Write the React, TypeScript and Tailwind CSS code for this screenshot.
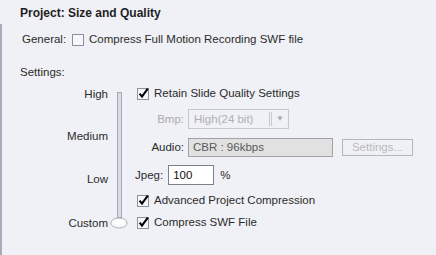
function CheckBox({ checked }: { checked?: boolean }) {
  return (
    <svg width="13" height="13" viewBox="0 0 13 13" className="shrink-0">
      <rect x="0.5" y="1.5" width="11" height="11" fill="#f5f6f9" stroke="#8c91a1" />
      {checked && <path d="M2.6 6.6 L5 9.6 L10.8 1.6" fill="none" stroke="#000" strokeWidth="2.1" />}
    </svg>
  )
}

function CheckRow({ label, checked, className }: { label: string; checked?: boolean; className?: string }) {
  return (
    <div className={`flex items-center h-5 gap-[4px] ${className ?? ''}`}>
      <CheckBox checked={checked} />
      <span>{label}</span>
    </div>
  )
}

export default function App() {
  return (
    <div className="w-[436px] h-[255px] bg-[#eff1f6] text-[#2b2b2b] text-[11.5px] leading-5 font-['Liberation_Sans',Arial,sans-serif] overflow-hidden">
      <div className="pl-5 pt-[3px] h-6 font-bold text-[12px] text-[#1f1f1f]">Project: Size and Quality</div>

      <div className="border-l-2 border-[#a6abba] h-[231px] pt-[5px]">
        {/* general */}
        <div className="flex items-center h-5 pl-5">
          <span className="w-[50px]">General:</span>
          <CheckRow label="Compress Full Motion Recording SWF file" />
        </div>

        <div className="mt-[13px] pl-[18px]">Settings:</div>

        <div className="flex mt-px">
          {/* quality labels */}
          <div className="w-[106px] flex flex-col items-end">
            <span className="mt-px">High</span>
            <span className="mt-[22px]">Medium</span>
            <span className="mt-[23px]">Low</span>
            <span className="mt-6">Custom</span>
          </div>

          {/* slider */}
          <div className="relative w-[22px] shrink-0">
            <div className="ml-[9px] mt-[9px] w-[5px] h-[126px] border border-[#a4a9b7] bg-[#d9dce4]" />
            <svg width="18" height="12" viewBox="0 0 18 12" className="absolute left-[2px] top-[134px]">
              <ellipse cx="9" cy="6" rx="8.2" ry="5" fill="#f7f8fa" stroke="#aeb2bb" />
              <ellipse cx="9" cy="5" rx="5.5" ry="2.5" fill="#ffffff" />
            </svg>
          </div>

          {/* options */}
          <div className="ml-[7px] flex flex-col">
            <CheckRow label="Retain Slide Quality Settings" checked />

            <div className="flex items-center h-5 mt-1.5">
              <span className="w-[47px] text-right text-[#aaaaaa]">Bmp:</span>
              <div className="ml-1 w-[101px] h-5 border border-[#c6c8cc] flex items-center text-[#b0b0b0]">
                <span className="pl-[5px] flex-1">High(24 bit)</span>
                <div className="w-[3px] h-[14px] border-x border-[#c8c9cc]" />
                <span className="w-4 text-center text-[8px] leading-none text-[#a8a8a8]">▼</span>
              </div>
            </div>

            <div className="flex items-center h-5 mt-2">
              <span className="w-[47px] text-right">Audio:</span>
              <div className="ml-1 w-[145px] h-[19px] border border-[#a2a2a2] bg-[#e1e1e1] flex items-center text-[#5a5a5a] pl-1">
                CBR : 96kbps
              </div>
              <div className="ml-[9px] w-[71px] h-[17px] border border-[#b7b7b7] flex items-center justify-center text-[#b9b9b9]">
                Settings...
              </div>
            </div>

            <div className="flex items-center h-5 mt-2 -ml-0.5">
              <span>Jpeg:</span>
              <div className="ml-[5px] w-[46px] h-5 border border-[#7c808c] bg-white flex items-center pl-1 text-[#111]">100</div>
              <span className="ml-[6px]">%</span>
            </div>

            <CheckRow label="Advanced Project Compression" checked className="mt-[5px]" />
            <CheckRow label="Compress SWF File" checked className="mt-0.5" />
          </div>
        </div>
      </div>
    </div>
  )
}
